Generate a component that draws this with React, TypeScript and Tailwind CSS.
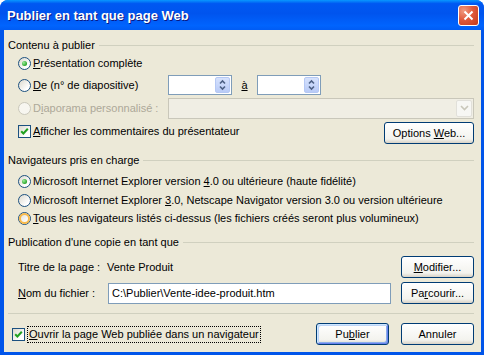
import React from "react";

const Mn = ({ children }: { children: React.ReactNode }) => (
  <span className="underline underline-offset-[1px]">{children}</span>
);

function Radio({ checked = false, disabled = false, hot = false }) {
  return (
    <span
      className={
        disabled
          ? "relative flex h-[13px] w-[13px] shrink-0 items-center justify-center rounded-full border border-[#cac8bb] bg-[#f7f6f0]"
          : "relative flex h-[13px] w-[13px] shrink-0 items-center justify-center rounded-full border border-[#1c5180] bg-[linear-gradient(135deg,#dcd9cd,#ffffff_75%)]"
      }
    >
      {hot && <span className="absolute inset-0 rounded-full border-2 border-[#f8b94a]" />}
      {checked && (
        <span className="h-[5px] w-[5px] rounded-full bg-[radial-gradient(circle_at_35%_35%,#9cec9c,#21a121_75%)]" />
      )}
    </span>
  );
}

function Check() {
  return (
    <span className="flex h-[13px] w-[13px] shrink-0 items-center justify-center border border-[#1c5180] bg-[linear-gradient(135deg,#dcd9cd,#ffffff_75%)]">
      <svg width="9" height="9" viewBox="0 0 9 9">
        <path d="M1.2 4.2 L3.4 6.5 L7.8 1.8" fill="none" stroke="#21a121" strokeWidth="2" />
      </svg>
    </span>
  );
}

function Button({ children, wide = false, def = false }: { children: React.ReactNode; wide?: boolean; def?: boolean }) {
  return (
    <div
      className={`flex h-[22px] shrink-0 items-center justify-center rounded-[3px] border border-[#003c74] bg-[linear-gradient(to_bottom,#ffffff,#f3f3ee_80%,#d8d2c6)] ${
        wide ? "w-[90px]" : "w-[73px]"
      } ${def ? "shadow-[inset_1px_1px_0_#cee7ff,inset_-1px_-1px_0_#6982ee,inset_2px_2px_0_#bcd4f6,inset_-2px_-2px_0_#89adeb]" : ""}`}
    >
      <span>{children}</span>
    </div>
  );
}

function Spin() {
  return (
    <div className="flex h-[20px] w-[64px] shrink-0 items-center justify-end border border-[#7f9db9] bg-white pr-[1px]">
      <div className="h-[16px] w-[15px] rounded-[2px] border border-[#b5c8f4] bg-[linear-gradient(to_bottom,#d6e2fd,#b9cbf7)]">
        <svg width="13" height="14" viewBox="0 0 13 14">
          <path d="M4 5.5 L6.5 3 L9 5.5" fill="none" stroke="#4d6185" strokeWidth="1.6" />
          <path d="M4 8.5 L6.5 11 L9 8.5" fill="none" stroke="#4d6185" strokeWidth="1.6" />
        </svg>
      </div>
    </div>
  );
}

function Group({ title }: { title: string }) {
  return (
    <div className="flex h-[16px] items-center">
      <span>{title}</span>
      <div className="ml-[4px] h-px flex-1 bg-[#d0d0bf]" />
    </div>
  );
}

export default function App() {
  return (
    <div className="h-[355px] w-[484px] bg-white font-['Liberation_Sans',Arial,sans-serif] text-[11px] leading-none text-black">
      <div className="flex h-[355px] w-[484px] flex-col overflow-hidden rounded-t-[8px] bg-[#0055ea]">
        {/* title bar */}
        <div className="flex h-[30px] shrink-0 items-center justify-between bg-[linear-gradient(to_bottom,#0997ff_0%,#0058f2_12%,#0054ee_45%,#0064fe_85%,#005cf4_100%)] pl-[7px] pr-[5px]">
          <span className="text-[13px] font-bold text-white [text-shadow:1px_1px_0_#0a1883]">
            Publier en tant que page Web
          </span>
          <div className="flex h-[21px] w-[21px] items-center justify-center rounded-[3px] border border-white bg-[radial-gradient(circle_at_25%_25%,#f09a80,#e05a3c_45%,#c2391b)]">
            <svg width="11" height="11" viewBox="0 0 11 11">
              <path d="M1.5 1.5 L9.5 9.5 M9.5 1.5 L1.5 9.5" stroke="white" strokeWidth="2" />
            </svg>
          </div>
        </div>

        {/* body */}
        <div className="mb-[3px] ml-[4px] mr-[3px] flex flex-1 flex-col bg-[#ece9d8] pl-[4px] pr-[7px] pt-[7px]">
          <Group title="Contenu à publier" />
          <div className="ml-[10px] flex h-[20px] items-center gap-[2px]">
            <Radio checked />
            <span>
              <Mn>P</Mn>résentation complète
            </span>
          </div>
          <div className="ml-[10px] flex h-[24px] items-center">
            <div className="flex w-[150px] items-center gap-[2px]">
              <Radio />
              <span>
                <Mn>D</Mn>e (n° de diapositive)
              </span>
            </div>
            <Spin />
            <div className="flex w-[25px] justify-center">
              <Mn>à</Mn>
            </div>
            <Spin />
          </div>
          <div className="ml-[10px] flex h-[22px] items-center">
            <div className="flex w-[150px] items-center gap-[2px] text-[#aca899]">
              <Radio disabled />
              <span>
                D<Mn>i</Mn>aporama personnalisé :
              </span>
            </div>
            <div className="flex h-[21px] flex-1 items-center justify-end border border-[#c9c7ba] bg-[#f0eee4] pr-[1px]">
              <div className="flex h-[17px] w-[16px] items-center justify-center rounded-[2px] border border-[#e1e0da] bg-[#f7f7f4]">
                <svg width="9" height="6" viewBox="0 0 9 6">
                  <path d="M1 1 L4.5 4.5 L8 1" fill="none" stroke="#c9c7ba" strokeWidth="1.6" />
                </svg>
              </div>
            </div>
          </div>
          <div className="ml-[10px] mt-[3px] flex h-[22px] items-center justify-between">
            <div className="mb-[4px] flex items-center gap-[2px]">
              <Check />
              <span>
                <Mn>A</Mn>fficher les commentaires du présentateur
              </span>
            </div>
            <Button wide>
              Options <Mn>W</Mn>eb...
            </Button>
          </div>

          <div className="mt-[8px]">
            <Group title="Navigateurs pris en charge" />
          </div>
          <div className="ml-[10px] mt-[4px] flex h-[19px] items-center gap-[2px]">
            <Radio checked />
            <span>
              Microsoft Internet Explorer version <Mn>4</Mn>.0 ou ultérieure (haute fidélité)
            </span>
          </div>
          <div className="ml-[10px] flex h-[18px] items-center gap-[2px]">
            <Radio />
            <span>
              Microsoft Internet Explorer <Mn>3</Mn>.0, Netscape Navigator version 3.0 ou version ultérieure
            </span>
          </div>
          <div className="ml-[10px] flex h-[18px] items-center gap-[2px]">
            <Radio hot />
            <span>
              <Mn>T</Mn>ous les navigateurs listés ci-dessus (les fichiers créés seront plus volumineux)
            </span>
          </div>

          <div className="mt-[7px]">
            <Group title="Publication d'une copie en tant que" />
          </div>
          <div className="ml-[10px] mt-[6px] flex h-[22px] items-center">
            <span className="w-[89px]">Titre de la page :</span>
            <span className="flex-1">Vente Produit</span>
            <Button>
              <Mn>M</Mn>odifier...
            </Button>
          </div>
          <div className="ml-[10px] mt-[4px] flex h-[22px] items-center">
            <span className="w-[90px]">
              <Mn>N</Mn>om du fichier :
            </span>
            <div className="flex h-[21px] flex-1 items-center border border-[#7f9db9] bg-white pl-[3px]">
              C:\Publier\Vente-idee-produit.htm
            </div>
            <div className="ml-[10px]">
              <Button>
                Pa<Mn>r</Mn>courir...
              </Button>
            </div>
          </div>

          <div className="mt-[9px] h-px bg-[#d0d0bf]" />

          <div className="mt-[9px] flex h-[22px] items-center">
            <div className="ml-[4px] flex items-center gap-[2px]">
              <Check />
              <span className="border border-dotted border-black px-[1px] py-[2px]">
                <Mn>O</Mn>uvrir la page Web publiée dans un navigateur
              </span>
            </div>
            <div className="ml-auto flex gap-[12px]">
              <Button def>
                Pu<Mn>b</Mn>lier
              </Button>
              <Button>Annuler</Button>
            </div>
          </div>
        </div>
      </div>
    </div>
  );
}
